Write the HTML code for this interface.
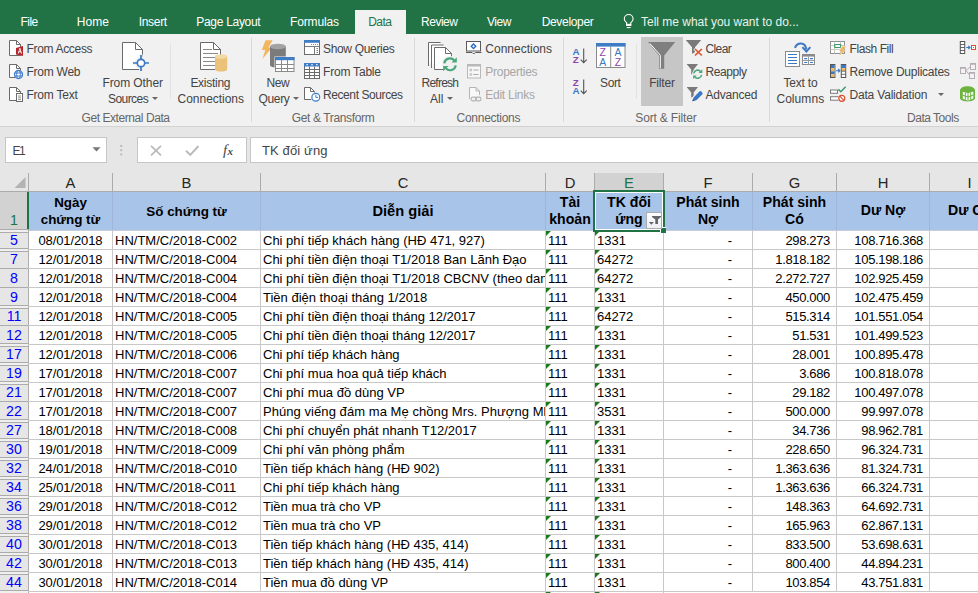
<!DOCTYPE html>
<html><head><meta charset="utf-8"><title>Excel</title>
<style>
*{box-sizing:border-box;margin:0;padding:0}
html,body{width:978px;height:593px;overflow:hidden;background:#fff}
body{font-family:"Liberation Sans",sans-serif;position:relative;color:#444}
i{font-style:normal}
#top{position:absolute;left:0;top:0;width:978px;height:34px;background:#217346}
.tab{position:absolute;top:14px;font-size:12px;color:#fff;white-space:nowrap;line-height:15px}
#datatab{position:absolute;left:355px;top:10px;width:51px;height:24px;background:#f1f1f1}
#ribbon{position:absolute;left:0;top:34px;width:978px;height:93px;background:#f1f1f1;border-bottom:1px solid #d2d2d2}
.t{position:absolute;font-size:12px;color:#444;white-space:nowrap;line-height:14px}
.dis{color:#a6a6a6}
.gl{position:absolute;font-size:12px;color:#666;white-space:nowrap;line-height:14px;top:111px}
.sep{position:absolute;top:38px;width:1px;height:84px;background:#d8d8d8}
.sep.s{top:44px;height:55px;background:#e2e2e2}
#filterbg{position:absolute;left:641px;top:37px;width:42px;height:69px;background:#c6c6c6}
#filetab{position:absolute;left:1px;top:10px;width:56px;height:24px;background:#217346}
.dd{position:absolute;width:0;height:0;border-left:3px solid transparent;border-right:3px solid transparent;border-top:3.5px solid #666;margin-left:-.5px}
#gap{position:absolute;left:0;top:127px;width:978px;height:46px;background:#e6e6e6}
.box{position:absolute;top:137px;height:26px;background:#fff;border:1px solid #c6c6c6}
#colh{position:absolute;left:0;top:173px;width:978px;height:19px;background:#e6e6e6;border-bottom:1px solid #ababab}
.ch{position:absolute;top:173px;height:18px;font-size:14.8px;line-height:20px;color:#262626;text-align:center;border-right:1px solid #ababab}
#rowh{position:absolute;left:0;top:192px;width:29px;height:403px;background:#e6e6e6;border-right:1px solid #ababab}
#hdr{position:absolute;left:29px;top:192px;width:950px;height:38px;background:#a9c4e9}
.hc{position:absolute;top:192px;height:38px;font-weight:bold;font-size:13.4px;line-height:17px;color:#000;text-align:center;display:flex;align-items:center;justify-content:center;border-right:1px solid #9fb6d8}
.r{position:absolute;left:0;width:978px;height:19px;border-bottom:1px solid #c8c8c8;font-size:13px;line-height:19px;color:#000;white-space:nowrap}
.r i{position:absolute;top:0;height:19px;overflow:hidden;border-right:1px solid #c8c8c8}
.r .rn{left:0;width:28px;font-size:14.2px;color:#0000ff;border:none;text-align:center;line-height:19px;height:18px}
.r .a{left:29px;width:84px;text-align:right;padding-right:9.5px;letter-spacing:-.1px}
.r .b{left:113px;width:148px;padding-left:2px}
.r .c{left:261px;width:285px;padding-left:2px;border-right:none}
.r .d{left:545px;width:50px;padding-left:2px;border-left:1px solid #c8c8c8}
.r .e{left:595px;width:69px;padding-left:2px}
.r .f{left:664px;width:89px;text-align:right;padding-right:20px}
.r .g{left:753px;width:84px;text-align:right;padding-right:6px;letter-spacing:-.35px}
.r .h{left:837px;width:93px;text-align:right;padding-right:6px;letter-spacing:-.33px}
.r .d:before,.r .e:before{content:"";position:absolute;left:0;top:0;border-top:5.5px solid #1a7a1a;border-right:5.5px solid transparent}
.hl1{position:absolute;left:0;width:28px;height:1px;background:#ababab}
.hl2{position:absolute;left:0;width:28px;height:4px;background:#f0f0f0;border-top:1px solid #ababab;border-bottom:1px solid #ababab}
#rn1{position:absolute;left:0;top:192px;width:29px;height:37px;background:#d2d2d2;border-right:2px solid #217346;font-size:14.2px;color:#217346;text-align:center;line-height:19px;padding-top:19px;padding-left:1px}
#sel{position:absolute;left:593px;top:190px;width:72px;height:42px;border:2px solid #217346;box-shadow:inset 0 0 0 1px #fff}
#fh{position:absolute;left:660px;top:227px;width:6px;height:6px;background:#217346;border-left:1px solid #fff;border-top:1px solid #fff}
#fbtn{position:absolute;left:646px;top:212px;width:16px;height:17px;background:linear-gradient(#fdfdfd,#eef0f5);border:1px solid #ababab}
#hline{position:absolute;left:29px;top:230px;width:949px;height:1px;background:#c8cdd6}
.fx{position:absolute;font-family:"Liberation Serif",serif;font-style:italic;font-size:15px;line-height:18px;color:#4a4a4a;font-weight:normal;letter-spacing:.3px}
.fx i{font-style:italic;font-size:11px;margin-left:0;font-weight:bold}
.sl{position:absolute;font-size:9.8px;line-height:10px;font-weight:bold}
.sl.b{font-size:10.5px;line-height:11px;font-weight:normal}
</style></head><body>
<div id="top"></div>
<div id="filetab"></div>
<div id="datatab"></div>
<div id="ribbon"></div>
<div class="sep" style="left:251px"></div>
<div class="sep" style="left:414px"></div>
<div class="sep" style="left:563px"></div>
<div class="sep" style="left:769px"></div>
<div class="sep s" style="left:170px"></div>
<div class="sep s" style="left:636px"></div>
<div id="filterbg"></div>
<!-- Get External Data -->
<b class="dd" style="left:152px;top:97px"></b>
<!-- Get & Transform -->
<b class="dd" style="left:293px;top:97px"></b>
<!-- Connections -->
<b class="dd" style="left:447px;top:97px"></b>
<!-- Sort & Filter -->
<!-- Data Tools -->
<b class="dd" style="left:938px;top:93px"></b>
<!--TEXTS-->
<!--ICONS-->

<div id="gap"></div>
<div class="box" style="left:5px;width:102px"></div>
<div class="box" style="left:137px;width:110px"></div>
<div class="box" style="left:250px;width:730px"></div>
<svg id="icons" width="978" height="170" viewBox="0 0 978 170" style="position:absolute;left:0;top:0" fill="none">
<!-- bulb -->
<g stroke="#fff" stroke-width="1.100"><path d="M626.600 24.200V22.600C625.200 21.500 624.300 20.300 624.300 18.900A4.400 4.400 0 0 1 633.100 18.900C633.100 20.300 632.200 21.500 630.800 22.600V24.200"/></g>
<rect x="626" y="23.800" width="5.400" height="2.200" fill="#fff"/><rect x="626.800" y="27" width="3.800" height="1.100" fill="#fff"/>
<!-- From Access -->
<g stroke="#6b6b6b" stroke-width="1"><path d="M9.5 40.5H16.5L20.5 44.5V55.5H9.5Z" fill="#fff"/><path d="M16.5 40.5V44.5H20.5"/></g>
<path d="M16 48L23 46V56L16 54.5Z" fill="#b3262d"/>
<path d="M17.8 53.6L19.5 48H20.3L22 53.6H21L20.6 52.2H19.1L18.7 53.6Z M19.3 51.3H20.5L19.9 49.3Z" fill="#fff"/>
<!-- From Web -->
<g stroke="#6b6b6b" stroke-width="1"><path d="M9.5 64.5H16.5L20.5 68.5V77.5H9.5Z" fill="#fff"/><path d="M16.5 64.5V68.5H20.5"/></g>
<circle cx="18.5" cy="74.5" r="4.6" fill="#f1f1f1"/>
<circle cx="18.5" cy="74.5" r="4" fill="#fff" stroke="#3f7fca" stroke-width="1.3"/>
<path d="M14.8 73H22.2M14.8 76H22.2" stroke="#3f7fca" stroke-width="1"/><ellipse cx="18.5" cy="74.5" rx="1.9" ry="4" stroke="#3f7fca" stroke-width="1"/>
<!-- From Text -->
<g stroke="#6b6b6b" stroke-width="1"><path d="M9.5 87.5H16.5L20.5 91.5V100.5H9.5Z" fill="#fff"/><path d="M16.5 87.5V91.5H20.5"/>
<rect x="16.5" y="93.5" width="6" height="8" fill="#fff"/></g>
<path d="M18 96H21M18 97.8H21M18 99.6H21" stroke="#7a7a7a" stroke-width=".8"/>
<!-- From Other Sources -->
<g stroke="#6b6b6b" stroke-width="1"><path d="M122.500 42.500H135.500L142.500 49.500V69.500H122.500Z" fill="#fff"/><path d="M135.500 42.500V49.500H142.500"/></g>
<circle cx="141" cy="63" r="6.5" fill="#f1f1f1" stroke="none"/>
<path d="M132.500 63H149.500M141 54.500V71.500" stroke="#f1f1f1" stroke-width="3.500"/>
<circle cx="141" cy="63" r="3.700" fill="#fff" stroke="#3b78c3" stroke-width="1.700"/>
<path d="M133 63H137.300M144.700 63H149M141 55V59.300M141 66.700V71" stroke="#3b78c3" stroke-width="1.700"/>
<!-- Existing Connections -->
<g stroke="#6b6b6b" stroke-width="1"><path d="M200.500 42.500H213.500L220.500 49.500V69.500H200.500Z" fill="#fff"/><path d="M213.500 42.500V49.500H220.500"/></g>
<path d="M203 49.500H212M203 53.500H218M203 57.500H218M203 61.500H218M203 65.500H218" stroke="#8a8a8a" stroke-width="1"/>
<path d="M215 56.500V69.300A6.100 2.300 0 0 0 227.200 69.300V56.500Z" fill="#eac27a"/>
<ellipse cx="221.100" cy="56.500" rx="6.100" ry="2.300" fill="#f3d9a4"/>
<!-- New Query -->
<path d="M265.500 40.200H272.600L268.500 47.500H272L262.500 58.900L265.300 50H261.800Z" fill="#f2b660"/>
<path d="M270 46.500V65.200A7.900 2.500 0 0 0 285.800 65.200V46.500Z" fill="#7b7b7b"/>
<ellipse cx="277.900" cy="46.500" rx="7.900" ry="2.700" fill="#a3a3a3"/>
<rect x="274.500" y="56.500" width="20.500" height="16" fill="#f1f1f1" stroke="none"/>
<rect x="275.500" y="57.500" width="18.500" height="14" fill="#fff" stroke="#8a8a8a" stroke-width="1"/>
<rect x="275" y="57" width="19.500" height="3.200" fill="#3e7dc6"/>
<path d="M275.500 64.500H294M275.500 68.500H294M281.500 60V71.500M287.500 60V71.500" stroke="#8a8a8a" stroke-width="1"/>
<!-- Show Queries -->
<rect x="304.500" y="40.500" width="15" height="14" fill="#fff" stroke="#6b6b6b"/>
<rect x="304" y="40" width="16" height="2.800" fill="#3e7dc6"/>
<path d="M304.500 46.500H319.500M314.500 46.500V54.500" stroke="#7a7a7a" stroke-width="1"/><path d="M311 44.500H318" stroke="#8a8a8a" stroke-width="1" stroke-dasharray="1 1"/><path d="M316.500 48.500H318M316.500 50.500H318M316.500 52.500H318" stroke="#7a7a7a" stroke-width="1"/>
<!-- From Table -->
<rect x="304.500" y="63.500" width="15" height="15" fill="#fff" stroke="#6b6b6b"/>
<rect x="304" y="63" width="16" height="3.500" fill="#3e7dc6"/>
<path d="M305 69.500H319.500M305 72.500H319.500M305 75.500H319.500M309.500 66.500V78.500M314.500 66.500V78.500" stroke="#6b6b6b" stroke-width="1"/>
<path d="M306.300 64.700H308M311.200 64.700H312.900M316 64.700H317.700" stroke="#fff" stroke-width="1.100"/>
<!-- Recent Sources -->
<g stroke="#6b6b6b" stroke-width="1"><path d="M304.500 87.500H310.500L314.500 91.500V99.500H304.500Z" fill="#fff"/><path d="M310.500 87.500V91.500H314.500"/></g>
<circle cx="315.800" cy="97.200" r="5" fill="#f1f1f1"/>
<circle cx="315.800" cy="97.200" r="3.900" fill="#fff" stroke="#3f7fca" stroke-width="1.200"/>
<path d="M315.800 94.800V97.400H318" stroke="#3f7fca" stroke-width="1"/>
<!-- Refresh All -->
<g stroke="#6b6b6b" stroke-width="1" fill="#fff"><path d="M428.500 66V42.500H440.500"/><path d="M431.500 68V45H443.500" /><path d="M434.500 69.500V47.500H445.500L451.500 53.500V69.500Z"/><path d="M445.500 47.500V53.500H451.500" fill="none"/></g>
<circle cx="450" cy="64.300" r="8.300" fill="#f1f1f1"/>
<g stroke="#4aa77c" stroke-width="2.200" fill="none"><path d="M444.300 63.300A5.700 5.700 0 0 1 454.200 60.300"/><path d="M455.700 65.300A5.700 5.700 0 0 1 445.800 68.300"/></g>
<path d="M456.800 57.300V62.600H451.500Z" fill="#4aa77c"/><path d="M443.200 71.300V66H448.500Z" fill="#4aa77c"/>
<!-- Connections -->
<rect x="466.500" y="41.500" width="14" height="9.500" fill="#fff" stroke="#5a5a5a"/>
<path d="M466 52.500H472L473 53.500H474.500L475.500 52.500H481.500" stroke="#5a5a5a" stroke-width="1"/>
<rect x="471.900" y="44.600" width="3.200" height="3.200" transform="rotate(45 473.500 46.200)" fill="#fff" stroke="#2f6fc0" stroke-width="1.400"/>
<!-- Properties (disabled) -->
<rect x="467.500" y="64.500" width="13" height="13.500" fill="#f7f7f7" stroke="#b9b9b9"/>
<rect x="467" y="64" width="14" height="2.500" fill="#b9b9b9"/>
<circle cx="470.800" cy="70" r="1" stroke="#a9a9a9" stroke-width=".8"/><circle cx="470.800" cy="74.500" r="1" stroke="#a9a9a9" stroke-width=".8"/>
<path d="M473.500 70H478.500M473.500 74.500H478.500" stroke="#a9a9a9" stroke-width="1"/>
<!-- Edit Links (disabled) -->
<g stroke="#b5b5b5" stroke-width="1"><path d="M469.500 99V87.500H476L479.500 91V95" fill="#f9f9f9"/><path d="M476 87.500V91H479.500"/>
<rect x="471" y="97.200" width="5.500" height="3.600" rx="1.800" stroke-width="1.200"/><rect x="475.500" y="97.200" width="5.500" height="3.600" rx="1.800" stroke-width="1.200"/></g>
<!-- Sort AZ / ZA arrows -->
<g stroke="#555" stroke-width="1.100"><path d="M583.700 48.500V62.500M580.700 59.700L583.700 62.700L586.700 59.700"/><path d="M583.700 79.500V93.500M580.700 90.700L583.700 93.700L586.700 90.700"/></g>
<!-- Sort big icon -->
<rect x="596.500" y="43.500" width="28.500" height="24" fill="#fff" stroke="#8a8a8a"/>
<rect x="596" y="43" width="29.500" height="3.600" fill="#3e7dc6"/>
<path d="M610.700 46.500V67.500" stroke="#8a8a8a" stroke-width="1"/>
<!-- Filter big funnel -->
<path d="M648 42H675.200L664.200 55.500V68.800H659V55.500Z" fill="#7f7f7f"/>
<path d="M649.800 43.400L660.300 55.200V68.300" stroke="#fff" stroke-width="1"/>
<!-- small funnels -->
<g fill="#7a7a7a"><path d="M685.800 40.100H701.200L695 47.300V52.300L692 53.700V47.300Z"/><path d="M686.600 64.100H698L693.700 69.500V73.600L691.200 74.600V69.500Z"/><path d="M686.600 87.100H698L693.700 92.500V96.600L691.200 97.600V92.500Z"/></g>
<!-- Clear red X -->
<path d="M694.500 48.600L702 55.600M702 48.600L694.500 55.600" stroke="#f1f1f1" stroke-width="3.400"/>
<path d="M695 49L701.800 55.500M701.800 49L695 55.500" stroke="#e0532f" stroke-width="1.700"/>
<!-- Reapply green refresh -->
<circle cx="697.700" cy="74.200" r="5.600" fill="#f1f1f1"/>
<g stroke="#4aa77c" stroke-width="1.500" fill="none"><path d="M693.800 73.500A3.900 3.900 0 0 1 700.600 71.500"/><path d="M701.600 74.900A3.900 3.900 0 0 1 694.800 76.900"/></g>
<path d="M702.300 69.300V73H698.600Z" fill="#4aa77c"/><path d="M693.100 79.100V75.400H696.800Z" fill="#4aa77c"/>
<!-- Advanced pencil -->
<path d="M691.300 102.300L693.200 96.300L699.300 90.200L703.800 94.700L697.700 100.800Z" fill="#f1f1f1"/>
<path d="M692.300 101.300L693.600 97.400L699.400 91.600A1.400 1.400 0 0 1 701.400 91.600L702.200 92.400A1.400 1.400 0 0 1 702.200 94.400L696.400 100.200Z" fill="#3b78c3"/>
<path d="M692.300 101.300L693.100 98.900L694.700 100.500Z" fill="#555"/>
<!-- Text to Columns -->
<rect x="785.500" y="51.500" width="14" height="15" fill="#fff" stroke="#8a8a8a"/>
<path d="M788 54.500H797M788 57.500H797M788 60.500H797M788 63.500H797" stroke="#3b78c3" stroke-width="1"/>
<rect x="802.500" y="54.500" width="12" height="10" fill="#fff" stroke="#8a8a8a"/>
<rect x="802" y="54" width="13" height="2.600" fill="#8a8a8a"/>
<path d="M808.500 56.500V64.500M802.500 60.500H814.500" stroke="#9a9a9a"/>
<path d="M804.200 58.600H807.200M810 58.600H813M804.200 62.500H807.200M810 62.500H813" stroke="#3b78c3" stroke-width="1.100"/>
<path d="M795 47.800C797 42.300 805.200 41.300 806.400 49.500" stroke="#3b78c3" stroke-width="2.100"/>
<path d="M802.400 47.200L806.400 51.600L810.300 47.200" stroke="#3b78c3" stroke-width="2"/>
<!-- Flash Fill -->
<rect x="830.500" y="41.500" width="14" height="12" fill="#fff" stroke="#8f8f8f"/>
<path d="M830.500 45.500H844.500M830.500 49.500H844.500M834.500 41.500V53.500M840.500 41.500V53.500" stroke="#c9c9c9" stroke-width="1"/>
<rect x="834.800" y="44.500" width="5.800" height="3" fill="#fff" stroke="#3f9a6d" stroke-width="1.100"/>
<path d="M841.500 46H846.500L843 50H845.800L839.500 56L841.300 51H838.800Z" fill="#f1f1f1"/>
<path d="M842 46.400H846L843 50.200H845.600L839.400 55.800L841.600 51.200H839.300Z" fill="#f2b660"/>
<!-- Remove Duplicates -->
<rect x="830.500" y="64.500" width="4.400" height="13" fill="#fff" stroke="#555"/>
<rect x="831" y="65" width="3.400" height="3" fill="#3b78c3"/><rect x="831" y="68.200" width="3.400" height="2.900" fill="#eeb45c"/><rect x="831" y="71.300" width="3.400" height="2.900" fill="#3b78c3"/><rect x="831" y="74.400" width="3.400" height="2.600" fill="#eeb45c"/>
<rect x="841.300" y="64.500" width="4.400" height="13" fill="#fff" stroke="#555"/>
<rect x="841.800" y="65" width="3.400" height="3" fill="#3b78c3"/><rect x="841.800" y="68.200" width="3.400" height="2.900" fill="#eeb45c"/>
<path d="M841.300 71.200H845.700M841.300 74.300H845.700" stroke="#555" stroke-width=".8"/>
<path d="M836 70.700H839.800M838.200 69L839.900 70.700L838.200 72.400" stroke="#3b78c3" stroke-width="1.100"/>
<!-- Data Validation -->
<rect x="830.500" y="90" width="7" height="3.300" fill="#fff" stroke="#7a7a7a"/>
<rect x="830.500" y="96.700" width="8" height="3.500" fill="#fff" stroke="#7a7a7a"/>
<path d="M838.400 89.400L840.900 91.800L845.600 86.800" stroke="#3f9a6d" stroke-width="1.500"/>
<circle cx="841.800" cy="98.300" r="3.900" fill="#f1f1f1"/>
<circle cx="841.800" cy="98.300" r="3" fill="#fff" stroke="#d9502f" stroke-width="1.200"/>
<path d="M839.700 96.200L843.900 100.400" stroke="#d9502f" stroke-width="1.200"/>
<!-- Consolidate -->
<rect x="960.300" y="41.500" width="4.400" height="12" fill="#fff" stroke="#555"/>
<path d="M960.300 44.500H964.700M960.300 47.500H964.700M960.300 50.500H964.700" stroke="#555" stroke-width=".9"/>
<path d="M966.300 47.500H969.800M968.300 45.800L970 47.500L968.300 49.200" stroke="#3b78c3" stroke-width="1.100"/>
<rect x="971.500" y="45.500" width="4" height="4" fill="#fff" stroke="#d9502f" stroke-width="1"/>
<rect x="973" y="47" width="1" height="1" fill="#d9502f"/>
<!-- Relationships (disabled) -->
<g stroke="#b4aeb4" stroke-width="1"><path d="M966 70.500L970.500 66.500M966 70.500L969.500 75"/>
<rect x="960.500" y="67.500" width="5" height="6" fill="#f4f2f4"/><rect x="970.500" y="63.500" width="5" height="6" fill="#f4f2f4"/><rect x="969.500" y="72.500" width="5" height="6" fill="#f4f2f4"/></g>
<path d="M960 68H966M970 64H976M969 73H975" stroke="#b4aeb4" stroke-width="1.600"/>
<!-- Manage data model (green cube) -->
<path d="M960 90.500C960 84.800 975 84.800 975 90.500V98C975 102.500 960 102.500 960 98Z" fill="#6cb33f"/>
<path d="M962.800 91.800L968 93.300L973.300 91.600V98.600L968 100.700L962.800 98.800Z" fill="#fff" opacity=".92"/>
<path d="M968 93.300V100.700M962.800 95.300L968 97L973.300 95M965.400 92.600V99.800M970.700 92.500V99.700" stroke="#6cb33f" stroke-width="1"/>
<!-- formula bar -->
<path d="M92.500 147.300H100.500L96.500 151.500Z" fill="#777"/>
<g fill="#b4b4b4"><rect x="120.300" y="145" width="1.800" height="1.800"/><rect x="120.300" y="149.300" width="1.800" height="1.800"/><rect x="120.300" y="153.600" width="1.800" height="1.800"/></g>
<path d="M151 145.800L161 155.300M161 145.800L151 155.300" stroke="#b9b9b9" stroke-width="1.700"/>
<path d="M186 150.800L190.300 155L198.500 146" stroke="#b9b9b9" stroke-width="1.900"/>
</svg>

<span class="fx" style="left:223px;top:141px">f<i>x</i></span>
<span class="sl" style="left:572.4px;top:46.6px;color:#3b78c3">A</span><span class="sl" style="left:572.8px;top:54.6px;color:#8e44ad">Z</span>
<span class="sl" style="left:572.8px;top:77.6px;color:#8e44ad">Z</span><span class="sl" style="left:572.4px;top:85.6px;color:#3b78c3">A</span>
<span class="sl b" style="left:599.5px;top:46.5px;color:#8e44ad">Z</span><span class="sl b" style="left:614.5px;top:46.5px;color:#3b78c3">A</span>
<span class="sl b" style="left:599.3px;top:56.5px;color:#3b78c3">A</span><span class="sl b" style="left:614.8px;top:56.5px;color:#8e44ad">Z</span>

<span class="tab" id="x0" style="left:20.6px;top:14.5px;letter-spacing:-0.55px">File</span>
<span class="tab" id="x1" style="left:76.7px;top:14.5px;letter-spacing:0.06px">Home</span>
<span class="tab" id="x2" style="left:138.7px;top:14.5px;letter-spacing:-0.30px">Insert</span>
<span class="tab" id="x3" style="left:196.3px;top:14.5px;letter-spacing:-0.30px">Page Layout</span>
<span class="tab" id="x4" style="left:290.1px;top:14.5px;letter-spacing:-0.17px">Formulas</span>
<span class="tab" id="x5" style="left:368.3px;top:14.5px;letter-spacing:-0.59px;color:#217346">Data</span>
<span class="tab" id="x6" style="left:421.1px;top:14.5px;letter-spacing:-0.51px">Review</span>
<span class="tab" id="x7" style="left:487px;top:14.5px;letter-spacing:-0.43px">View</span>
<span class="tab" id="x8" style="left:541.7px;top:14.5px;letter-spacing:-0.33px">Developer</span>
<span class="tab" id="x9" style="left:641px;top:14.5px;letter-spacing:-0.01px;color:#eaf2ed">Tell me what you want to do...</span>
<span class="t" id="x10" style="left:26.5px;top:42px;letter-spacing:-0.33px">From Access</span>
<span class="t" id="x11" style="left:26.5px;top:65px;letter-spacing:-0.26px">From Web</span>
<span class="t" id="x12" style="left:26.5px;top:88px;letter-spacing:-0.23px">From Text</span>
<span class="t" id="x13" style="left:102.4px;top:76px;letter-spacing:-0.08px">From Other</span>
<span class="t" id="x14" style="left:108px;top:92px;letter-spacing:-0.56px">Sources</span>
<span class="t" id="x15" style="left:190.4px;top:76px;letter-spacing:-0.28px">Existing</span>
<span class="t" id="x16" style="left:177.6px;top:92px;letter-spacing:-0.03px">Connections</span>
<span class="gl" id="x17" style="left:81.5px;top:111px;letter-spacing:-0.43px">Get External Data</span>
<span class="t" id="x18" style="left:266.4px;top:76px;letter-spacing:-0.31px">New</span>
<span class="t" id="x19" style="left:258.5px;top:92px;letter-spacing:-0.35px">Query</span>
<span class="t" id="x20" style="left:323px;top:42px;letter-spacing:-0.33px">Show Queries</span>
<span class="t" id="x21" style="left:323px;top:65px;letter-spacing:-0.20px">From Table</span>
<span class="t" id="x22" style="left:323px;top:88px;letter-spacing:-0.41px">Recent Sources</span>
<span class="gl" id="x23" style="left:291.7px;top:111px;letter-spacing:-0.36px">Get &amp; Transform</span>
<span class="t" id="x24" style="left:421.5px;top:76px;letter-spacing:-0.76px">Refresh</span>
<span class="t" id="x25" style="left:430px;top:92px;letter-spacing:0.08px">All</span>
<span class="t" id="x26" style="left:485.3px;top:42px">Connections</span>
<span class="t dis" id="x27" style="left:485.3px;top:65px;letter-spacing:-0.27px">Properties</span>
<span class="t dis" id="x28" style="left:485.3px;top:88px;letter-spacing:-0.26px">Edit Links</span>
<span class="gl" id="x29" style="left:456.6px;top:111px;letter-spacing:-0.28px">Connections</span>
<span class="t" id="x30" style="left:600px;top:76px;letter-spacing:-0.37px">Sort</span>
<span class="t" id="x31" style="left:649.2px;top:76px;letter-spacing:-0.17px">Filter</span>
<span class="t" id="x32" style="left:705.5px;top:42px;letter-spacing:-0.62px">Clear</span>
<span class="t" id="x33" style="left:705.5px;top:65px;letter-spacing:-0.42px">Reapply</span>
<span class="t" id="x34" style="left:705.5px;top:88px;letter-spacing:-0.21px">Advanced</span>
<span class="gl" id="x35" style="left:635.3px;top:111px;letter-spacing:-0.16px">Sort &amp; Filter</span>
<span class="t" id="x36" style="left:783.6px;top:76px;letter-spacing:-0.23px">Text to</span>
<span class="t" id="x37" style="left:776.4px;top:92px;letter-spacing:0.07px">Columns</span>
<span class="t" id="x38" style="left:849.5px;top:42px;letter-spacing:-0.42px">Flash Fill</span>
<span class="t" id="x39" style="left:849.5px;top:65px;letter-spacing:-0.23px">Remove Duplicates</span>
<span class="t" id="x40" style="left:849.5px;top:88px;letter-spacing:-0.19px">Data Validation</span>
<span class="gl" id="x41" style="left:907px;top:111px;letter-spacing:-0.48px">Data Tools</span>
<span class="t" id="x42" style="left:12.5px;top:144px;letter-spacing:-1.39px">E1</span>
<span class="t" id="x43" style="left:262px;top:143.5px;letter-spacing:0.13px;font-size:13px">TK đối ứng</span>

<div id="colh"></div>
<svg width="28" height="18" style="position:absolute;left:0;top:173px"><path d="M25.5 4V15H14.5Z" fill="#b3b3b3"/></svg><div class="ch" style="left:0;width:29px"></div>
<div class="ch" style="left:29px;width:84px">A</div>
<div class="ch" style="left:113px;width:148px">B</div>
<div class="ch" style="left:261px;width:285px">C</div>
<div class="ch" style="left:546px;width:49px">D</div>
<div class="ch" style="left:595px;width:69px;background:#d2d2d2;color:#217346">E</div>
<div class="ch" style="left:664px;width:89px">F</div>
<div class="ch" style="left:753px;width:84px">G</div>
<div class="ch" style="left:837px;width:93px">H</div>
<div class="ch" style="left:930px;width:80px">I</div>
<div id="rowh"></div>
<div id="hdr"></div><div id="hline"></div>
<div class="hc" style="left:29px;width:84px"><span>Ngày<br>chứng từ</span></div>
<div class="hc" style="left:113px;width:148px"><span>Số chứng từ</span></div>
<div class="hc" style="left:261px;width:285px;font-size:14.67px"><span>Diễn giải</span></div>
<div class="hc" style="left:546px;width:49px;font-size:14.1px;line-height:17.5px"><span>Tài<br>khoản</span></div>
<div class="hc" style="left:595px;width:69px;font-size:14.1px;line-height:17.5px"><span>TK đối<br>ứng</span></div>
<div class="hc" style="left:664px;width:89px;font-size:14.1px;line-height:17.5px"><span>Phát sinh<br>Nợ</span></div>
<div class="hc" style="left:753px;width:84px;font-size:14.1px;line-height:17.5px"><span>Phát sinh<br>Có</span></div>
<div class="hc" style="left:837px;width:93px;font-size:14.1px;line-height:17.5px"><span>Dư Nợ</span></div>
<div class="hc" style="left:930px;width:80px;font-size:14.1px;line-height:17.5px"><span>Dư Có</span></div>
<div class="r" style="top:231px"><i class="rn">5</i><i class="a">08/01/2018</i><i class="b">HN/TM/C/2018-C002</i><i class="c">Chi phí tiếp khách hàng (HĐ 471, 927)</i><i class="d">111</i><i class="e">1331</i><i class="f">-</i><i class="g">298.273</i><i class="h">108.716.368</i></div>
<div class="r" style="top:250px"><i class="rn">7</i><i class="a">12/01/2018</i><i class="b">HN/TM/C/2018-C004</i><i class="c">Chi phí tiền điện thoại T1/2018 Ban Lãnh Đạo</i><i class="d">111</i><i class="e">64272</i><i class="f">-</i><i class="g">1.818.182</i><i class="h">105.198.186</i></div>
<div class="r" style="top:269px"><i class="rn">8</i><i class="a">12/01/2018</i><i class="b">HN/TM/C/2018-C004</i><i class="c">Chi phí tiền điện thoại T1/2018 CBCNV (theo danh sách)</i><i class="d">111</i><i class="e">64272</i><i class="f">-</i><i class="g">2.272.727</i><i class="h">102.925.459</i></div>
<div class="r" style="top:288px"><i class="rn">9</i><i class="a">12/01/2018</i><i class="b">HN/TM/C/2018-C004</i><i class="c">Tiền điện thoại tháng 1/2018</i><i class="d">111</i><i class="e">1331</i><i class="f">-</i><i class="g">450.000</i><i class="h">102.475.459</i></div>
<div class="r" style="top:307px"><i class="rn">11</i><i class="a">12/01/2018</i><i class="b">HN/TM/C/2018-C005</i><i class="c">Chi phí tiền điện thoại tháng 12/2017</i><i class="d">111</i><i class="e">64272</i><i class="f">-</i><i class="g">515.314</i><i class="h">101.551.054</i></div>
<div class="r" style="top:326px"><i class="rn">12</i><i class="a">12/01/2018</i><i class="b">HN/TM/C/2018-C005</i><i class="c">Chi phí tiền điện thoại tháng 12/2017</i><i class="d">111</i><i class="e">1331</i><i class="f">-</i><i class="g">51.531</i><i class="h">101.499.523</i></div>
<div class="r" style="top:345px"><i class="rn">17</i><i class="a">12/01/2018</i><i class="b">HN/TM/C/2018-C006</i><i class="c">Chi phí tiếp khách hàng</i><i class="d">111</i><i class="e">1331</i><i class="f">-</i><i class="g">28.001</i><i class="h">100.895.478</i></div>
<div class="r" style="top:364px"><i class="rn">19</i><i class="a">17/01/2018</i><i class="b">HN/TM/C/2018-C007</i><i class="c">Chi phí mua hoa quả tiếp khách</i><i class="d">111</i><i class="e">1331</i><i class="f">-</i><i class="g">3.686</i><i class="h">100.818.078</i></div>
<div class="r" style="top:383px"><i class="rn">21</i><i class="a">17/01/2018</i><i class="b">HN/TM/C/2018-C007</i><i class="c">Chi phí mua đồ dùng VP</i><i class="d">111</i><i class="e">1331</i><i class="f">-</i><i class="g">29.182</i><i class="h">100.497.078</i></div>
<div class="r" style="top:402px"><i class="rn">22</i><i class="a">17/01/2018</i><i class="b">HN/TM/C/2018-C007</i><i class="c" style="letter-spacing:.06px">Phúng viếng đám ma Mẹ chồng Mrs. Phượng Mkt</i><i class="d">111</i><i class="e">3531</i><i class="f">-</i><i class="g">500.000</i><i class="h">99.997.078</i></div>
<div class="r" style="top:421px"><i class="rn">27</i><i class="a">18/01/2018</i><i class="b">HN/TM/C/2018-C008</i><i class="c">Chi phí chuyển phát nhanh T12/2017</i><i class="d">111</i><i class="e">1331</i><i class="f">-</i><i class="g">34.736</i><i class="h">98.962.781</i></div>
<div class="r" style="top:440px"><i class="rn">30</i><i class="a">19/01/2018</i><i class="b">HN/TM/C/2018-C009</i><i class="c">Chi phí văn phòng phẩm</i><i class="d">111</i><i class="e">1331</i><i class="f">-</i><i class="g">228.650</i><i class="h">96.324.731</i></div>
<div class="r" style="top:459px"><i class="rn">32</i><i class="a">24/01/2018</i><i class="b">HN/TM/C/2018-C010</i><i class="c">Tiền tiếp khách hàng (HĐ 902)</i><i class="d">111</i><i class="e">1331</i><i class="f">-</i><i class="g">1.363.636</i><i class="h">81.324.731</i></div>
<div class="r" style="top:478px"><i class="rn">34</i><i class="a">25/01/2018</i><i class="b">HN/TM/C/2018-C011</i><i class="c">Chi phí tiếp khách hàng</i><i class="d">111</i><i class="e">1331</i><i class="f">-</i><i class="g">1.363.636</i><i class="h">66.324.731</i></div>
<div class="r" style="top:497px"><i class="rn">36</i><i class="a">29/01/2018</i><i class="b">HN/TM/C/2018-C012</i><i class="c">Tiền mua trà cho VP</i><i class="d">111</i><i class="e">1331</i><i class="f">-</i><i class="g">148.363</i><i class="h">64.692.731</i></div>
<div class="r" style="top:516px"><i class="rn">38</i><i class="a">29/01/2018</i><i class="b">HN/TM/C/2018-C012</i><i class="c">Tiền mua trà cho VP</i><i class="d">111</i><i class="e">1331</i><i class="f">-</i><i class="g">165.963</i><i class="h">62.867.131</i></div>
<div class="r" style="top:535px"><i class="rn">40</i><i class="a">30/01/2018</i><i class="b">HN/TM/C/2018-C013</i><i class="c">Tiền tiếp khách hàng (HĐ 435, 414)</i><i class="d">111</i><i class="e">1331</i><i class="f">-</i><i class="g">833.500</i><i class="h">53.698.631</i></div>
<div class="r" style="top:554px"><i class="rn">42</i><i class="a">30/01/2018</i><i class="b">HN/TM/C/2018-C013</i><i class="c">Tiền tiếp khách hàng (HĐ 435, 414)</i><i class="d">111</i><i class="e">1331</i><i class="f">-</i><i class="g">800.400</i><i class="h">44.894.231</i></div>
<div class="r" style="top:573px"><i class="rn">44</i><i class="a">30/01/2018</i><i class="b">HN/TM/C/2018-C014</i><i class="c">Tiền mua đồ dùng VP</i><i class="d">111</i><i class="e">1331</i><i class="f">-</i><i class="g">103.854</i><i class="h">43.751.831</i></div>
<div class="r" style="top:592px;border:none"><i class="d"></i><i class="e"></i></div>
<div class="hl2" style="top:229px"></div>
<div class="hl2" style="top:248px"></div>
<div class="hl1" style="top:268px"></div>
<div class="hl1" style="top:287px"></div>
<div class="hl2" style="top:305px"></div>
<div class="hl1" style="top:325px"></div>
<div class="hl2" style="top:343px"></div>
<div class="hl2" style="top:362px"></div>
<div class="hl2" style="top:381px"></div>
<div class="hl1" style="top:401px"></div>
<div class="hl2" style="top:419px"></div>
<div class="hl2" style="top:438px"></div>
<div class="hl2" style="top:457px"></div>
<div class="hl2" style="top:476px"></div>
<div class="hl2" style="top:495px"></div>
<div class="hl2" style="top:514px"></div>
<div class="hl2" style="top:533px"></div>
<div class="hl2" style="top:552px"></div>
<div class="hl2" style="top:571px"></div>
<div class="hl2" style="top:590px"></div>
<div id="rn1">1</div>
<div id="sel"></div>
<div id="fh"></div>
<div id="fbtn"><svg width="16" height="17" style="position:absolute;left:-1px;top:-1px"><path d="M6 4H15V5L12 7.500V12H9.300V7.500L6 5Z" fill="#666"/><path d="M2.800 10H7.900L5.350 12.800Z" fill="#666"/></svg></div>
</body></html>
